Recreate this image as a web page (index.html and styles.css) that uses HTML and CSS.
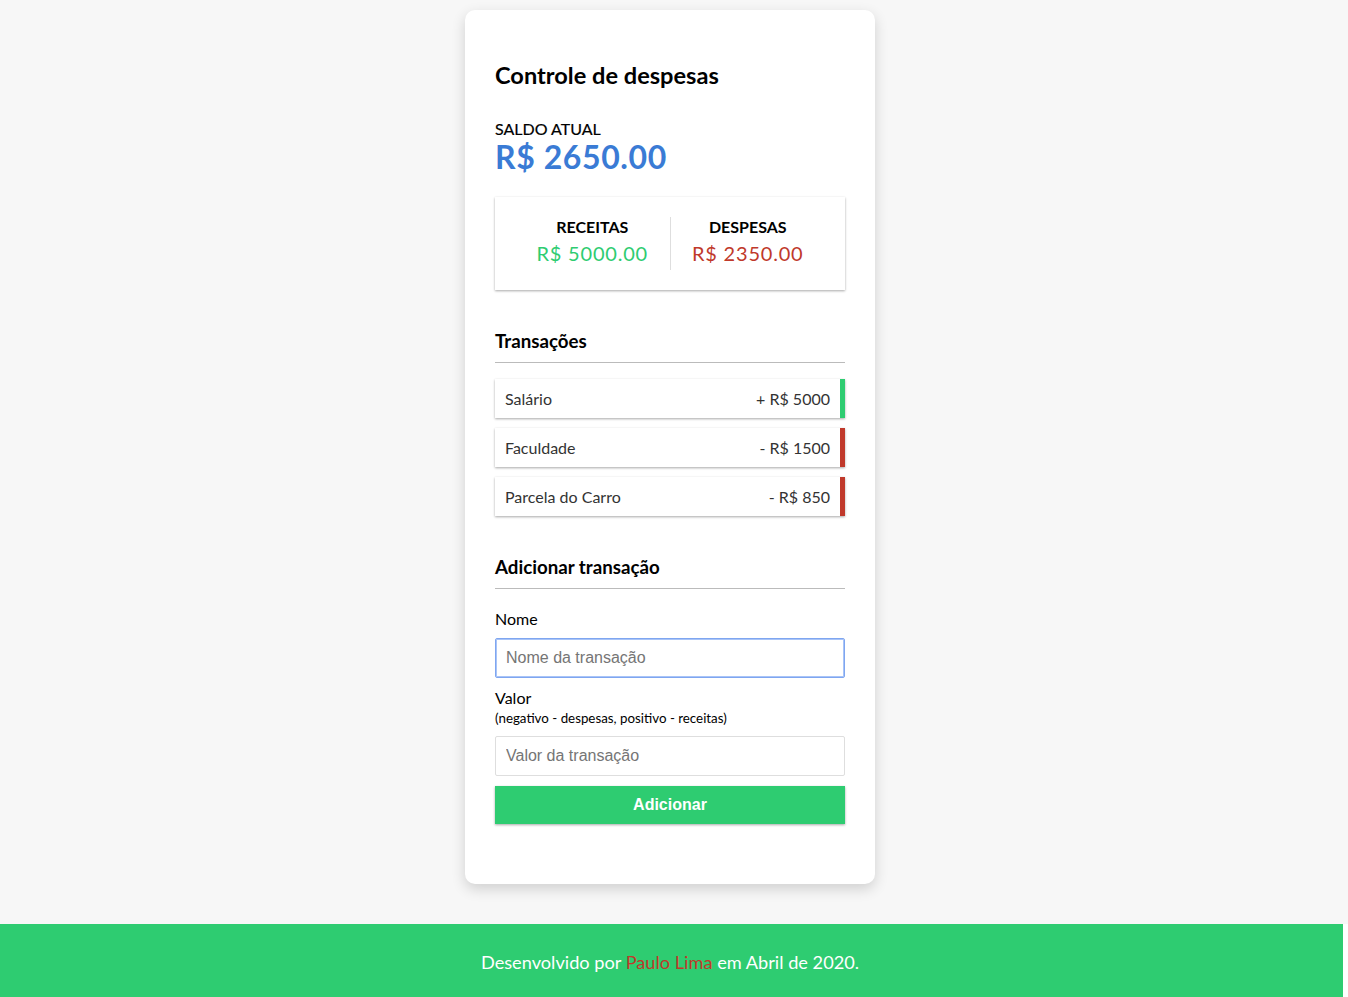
FILE: index.html
```html
<!DOCTYPE html>
<html lang="pt-BR">
<head>
<meta charset="utf-8">
<title>Controle de despesas</title>
<link rel="stylesheet" href="styles.css">
</head>
<body>
<main class="page">
  <div class="card">
    <h2 class="title">Controle de despesas</h2>
    <h4 class="balance-label">Saldo atual</h4>
    <h1 class="balance">R$ 2650.00</h1>

    <div class="inc-exp">
      <div class="inc-exp-col">
        <h4 class="inc-exp-label">Receitas</h4>
        <p class="money plus">R$ 5000.00</p>
      </div>
      <div class="inc-exp-col">
        <h4 class="inc-exp-label">Despesas</h4>
        <p class="money minus">R$ 2350.00</p>
      </div>
    </div>

    <h3 class="section-title">Transações</h3>
    <ul class="list">
      <li class="item plus"><span>Salário</span><span>+ R$ 5000</span></li>
      <li class="item minus"><span>Faculdade</span><span>- R$ 1500</span></li>
      <li class="item minus"><span>Parcela do Carro</span><span>- R$ 850</span></li>
    </ul>

    <h3 class="section-title">Adicionar transação</h3>
    <form class="form">
      <div class="form-control">
        <label class="label" for="text">Nome</label>
        <input class="input input-focus" type="text" id="text" placeholder="Nome da transação">
      </div>
      <div class="form-control">
        <label class="label" for="amount">Valor <br><small class="hint">(negativo - despesas, positivo - receitas)</small></label>
        <input class="input" type="text" id="amount" placeholder="Valor da transação">
      </div>
      <button class="btn" type="button">Adicionar</button>
    </form>
  </div>
</main>
<footer class="footer">
  <div class="footer-inner">
    <p class="footer-text">Desenvolvido por <span class="author">Paulo Lima</span> em Abril de 2020.</p>
  </div>
</footer>
</body>
</html>
```

FILE: styles.css
```css
* {
  box-sizing: border-box;
}

html, body {
  margin: 0;
  padding: 0;
}

body {
  background: #f7f7f7;
  font-family: Lato, "Noto Sans", sans-serif;
  color: #000;
}

.page {
  width: 1340px;
  display: flex;
  justify-content: center;
  padding: 10px 0 40px;
}

.card {
  width: 410px;
  background: #fff;
  border-radius: 10px;
  padding: 30px;
  box-shadow: 0 5px 14px rgba(0, 0, 0, 0.16);
}

.title {
  font-size: 23.6px;
  font-weight: 700;
  margin: 21px 0 30px;
  line-height: 28px;
}

.balance-label {
  margin: 0;
  font-size: 16px;
  font-weight: 400;
  text-transform: uppercase;
  line-height: 1.2;
  -webkit-text-stroke: 0.2px #000;
}

.balance {
  margin: 0;
  font-size: 32px;
  font-weight: 700;
  letter-spacing: 0.6px;
  color: #3a7bd5;
  line-height: 1.2;
}

.inc-exp {
  background: #fff;
  box-shadow: 0 1px 3px rgba(0, 0, 0, 0.12), 0 1px 2px rgba(0, 0, 0, 0.24);
  padding: 20px;
  display: flex;
  margin: 20px 0;
}

.inc-exp-col {
  flex: 1;
  text-align: center;
}

.inc-exp-col:first-child {
  border-right: 1px solid #dedede;
}

.inc-exp-label {
  margin: 0;
  font-size: 16px;
  font-weight: 700;
  text-transform: uppercase;
  line-height: 1.2;
}

.money {
  font-size: 20px;
  letter-spacing: 0.8px;
  margin: 5px 0;
  line-height: 1.2;
}

.money.plus {
  color: #2ecc71;
}

.money.minus {
  color: #c0392b;
}

.section-title {
  font-size: 18.72px;
  font-weight: 700;
  border-bottom: 1px solid #bbb;
  padding-bottom: 10px;
  margin: 40px 0 10px;
  line-height: 22px;
}

.list {
  list-style: none;
  padding: 0;
  margin: 16px 0 40px;
}

.item {
  background: #fff;
  box-shadow: 0 1px 3px rgba(0, 0, 0, 0.12), 0 1px 2px rgba(0, 0, 0, 0.24);
  color: #333;
  display: flex;
  justify-content: space-between;
  padding: 10px;
  margin: 10px 0;
  font-size: 16px;
  line-height: 19px;
}

.item.plus {
  border-right: 5px solid #2ecc71;
}

.item.minus {
  border-right: 5px solid #c0392b;
}

.form {
  margin: 0;
}

.label {
  display: inline-block;
  margin: 10px 0;
  font-size: 16px;
  line-height: 19px;
}

.hint {
  font-size: 13.33px;
  line-height: 1;
}

.input {
  display: block;
  width: 100%;
  border: 1px solid #dedede;
  border-radius: 2px;
  font-family: "Liberation Sans", Arial, sans-serif;
  font-size: 16px;
  padding: 10px;
  line-height: 18px;
  color: #333;
  outline: none;
}

.input::placeholder {
  color: #757575;
}

.input-focus {
  border-color: #7fa6f0;
  box-shadow: inset 0 0 0 1px #a9c4f7;
}

.btn {
  display: block;
  width: 100%;
  background: #2ecc71;
  color: #fff;
  border: 0;
  box-shadow: 0 1px 3px rgba(0, 0, 0, 0.12), 0 1px 2px rgba(0, 0, 0, 0.24);
  font-family: "Liberation Sans", Arial, sans-serif;
  font-size: 16px;
  font-weight: 700;
  line-height: 18px;
  padding: 10px;
  margin: 10px 0 30px;
}

.footer {
  background: #fff;
}

.footer-inner {
  width: 1343px;
  background: #2ecc71;
  height: 73px;
  padding-top: 27px;
}

.footer-text {
  width: 1340px;
  margin: 0;
  text-align: center;
  color: #fff;
  font-size: 18.2px;
  line-height: 22px;
}

.author {
  color: #c0392b;
}
```
